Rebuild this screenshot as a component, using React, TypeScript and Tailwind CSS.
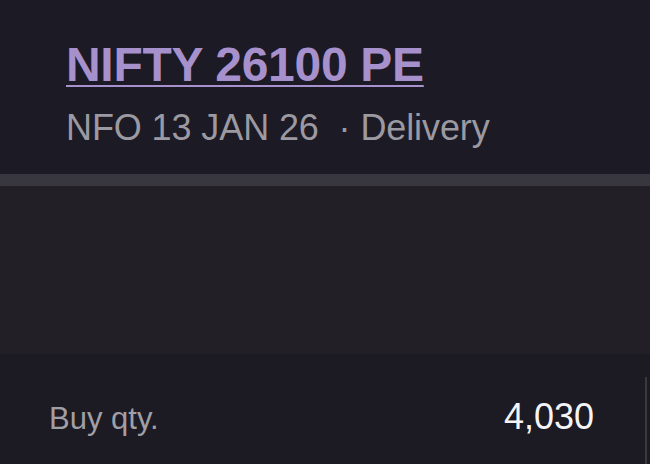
import React from "react";

function App() {
  return (
    <div className="w-[650px] h-[464px] overflow-hidden bg-[#1c1a23] font-['Liberation_Sans',Arial,sans-serif]">
      {/* header */}
      <div className="h-[174px] bg-[#1c1a24] pt-[41px] pl-[66px]">
        <div className="text-[48px] leading-none font-bold text-[#a691cd] underline decoration-2 underline-offset-[4px] tracking-[-0.3px]">
          NIFTY 26100 PE
        </div>
        <div className="mt-[21px] text-[36px] leading-none text-[#9b99a1] tracking-[-0.1px]">
          NFO 13 JAN 26{"\u00a0"} · Delivery
        </div>
      </div>

      <div className="h-[12px] bg-[#38363e]" />
      <div className="h-[168px] bg-[#222026]" />

      {/* qty row */}
      <div className="mt-[23px] mr-[3px] h-[200px] border-r-2 border-[#3a3940]">
        <div className="flex items-baseline justify-between pl-[49px] pr-[51px] pt-[22px]">
          <span className="text-[31px] leading-none text-[#a09fa6]">Buy qty.</span>
          <span className="text-[36px] leading-none text-[#f4f4f6]">4,030</span>
        </div>
      </div>
    </div>
  );
}

export default App;
